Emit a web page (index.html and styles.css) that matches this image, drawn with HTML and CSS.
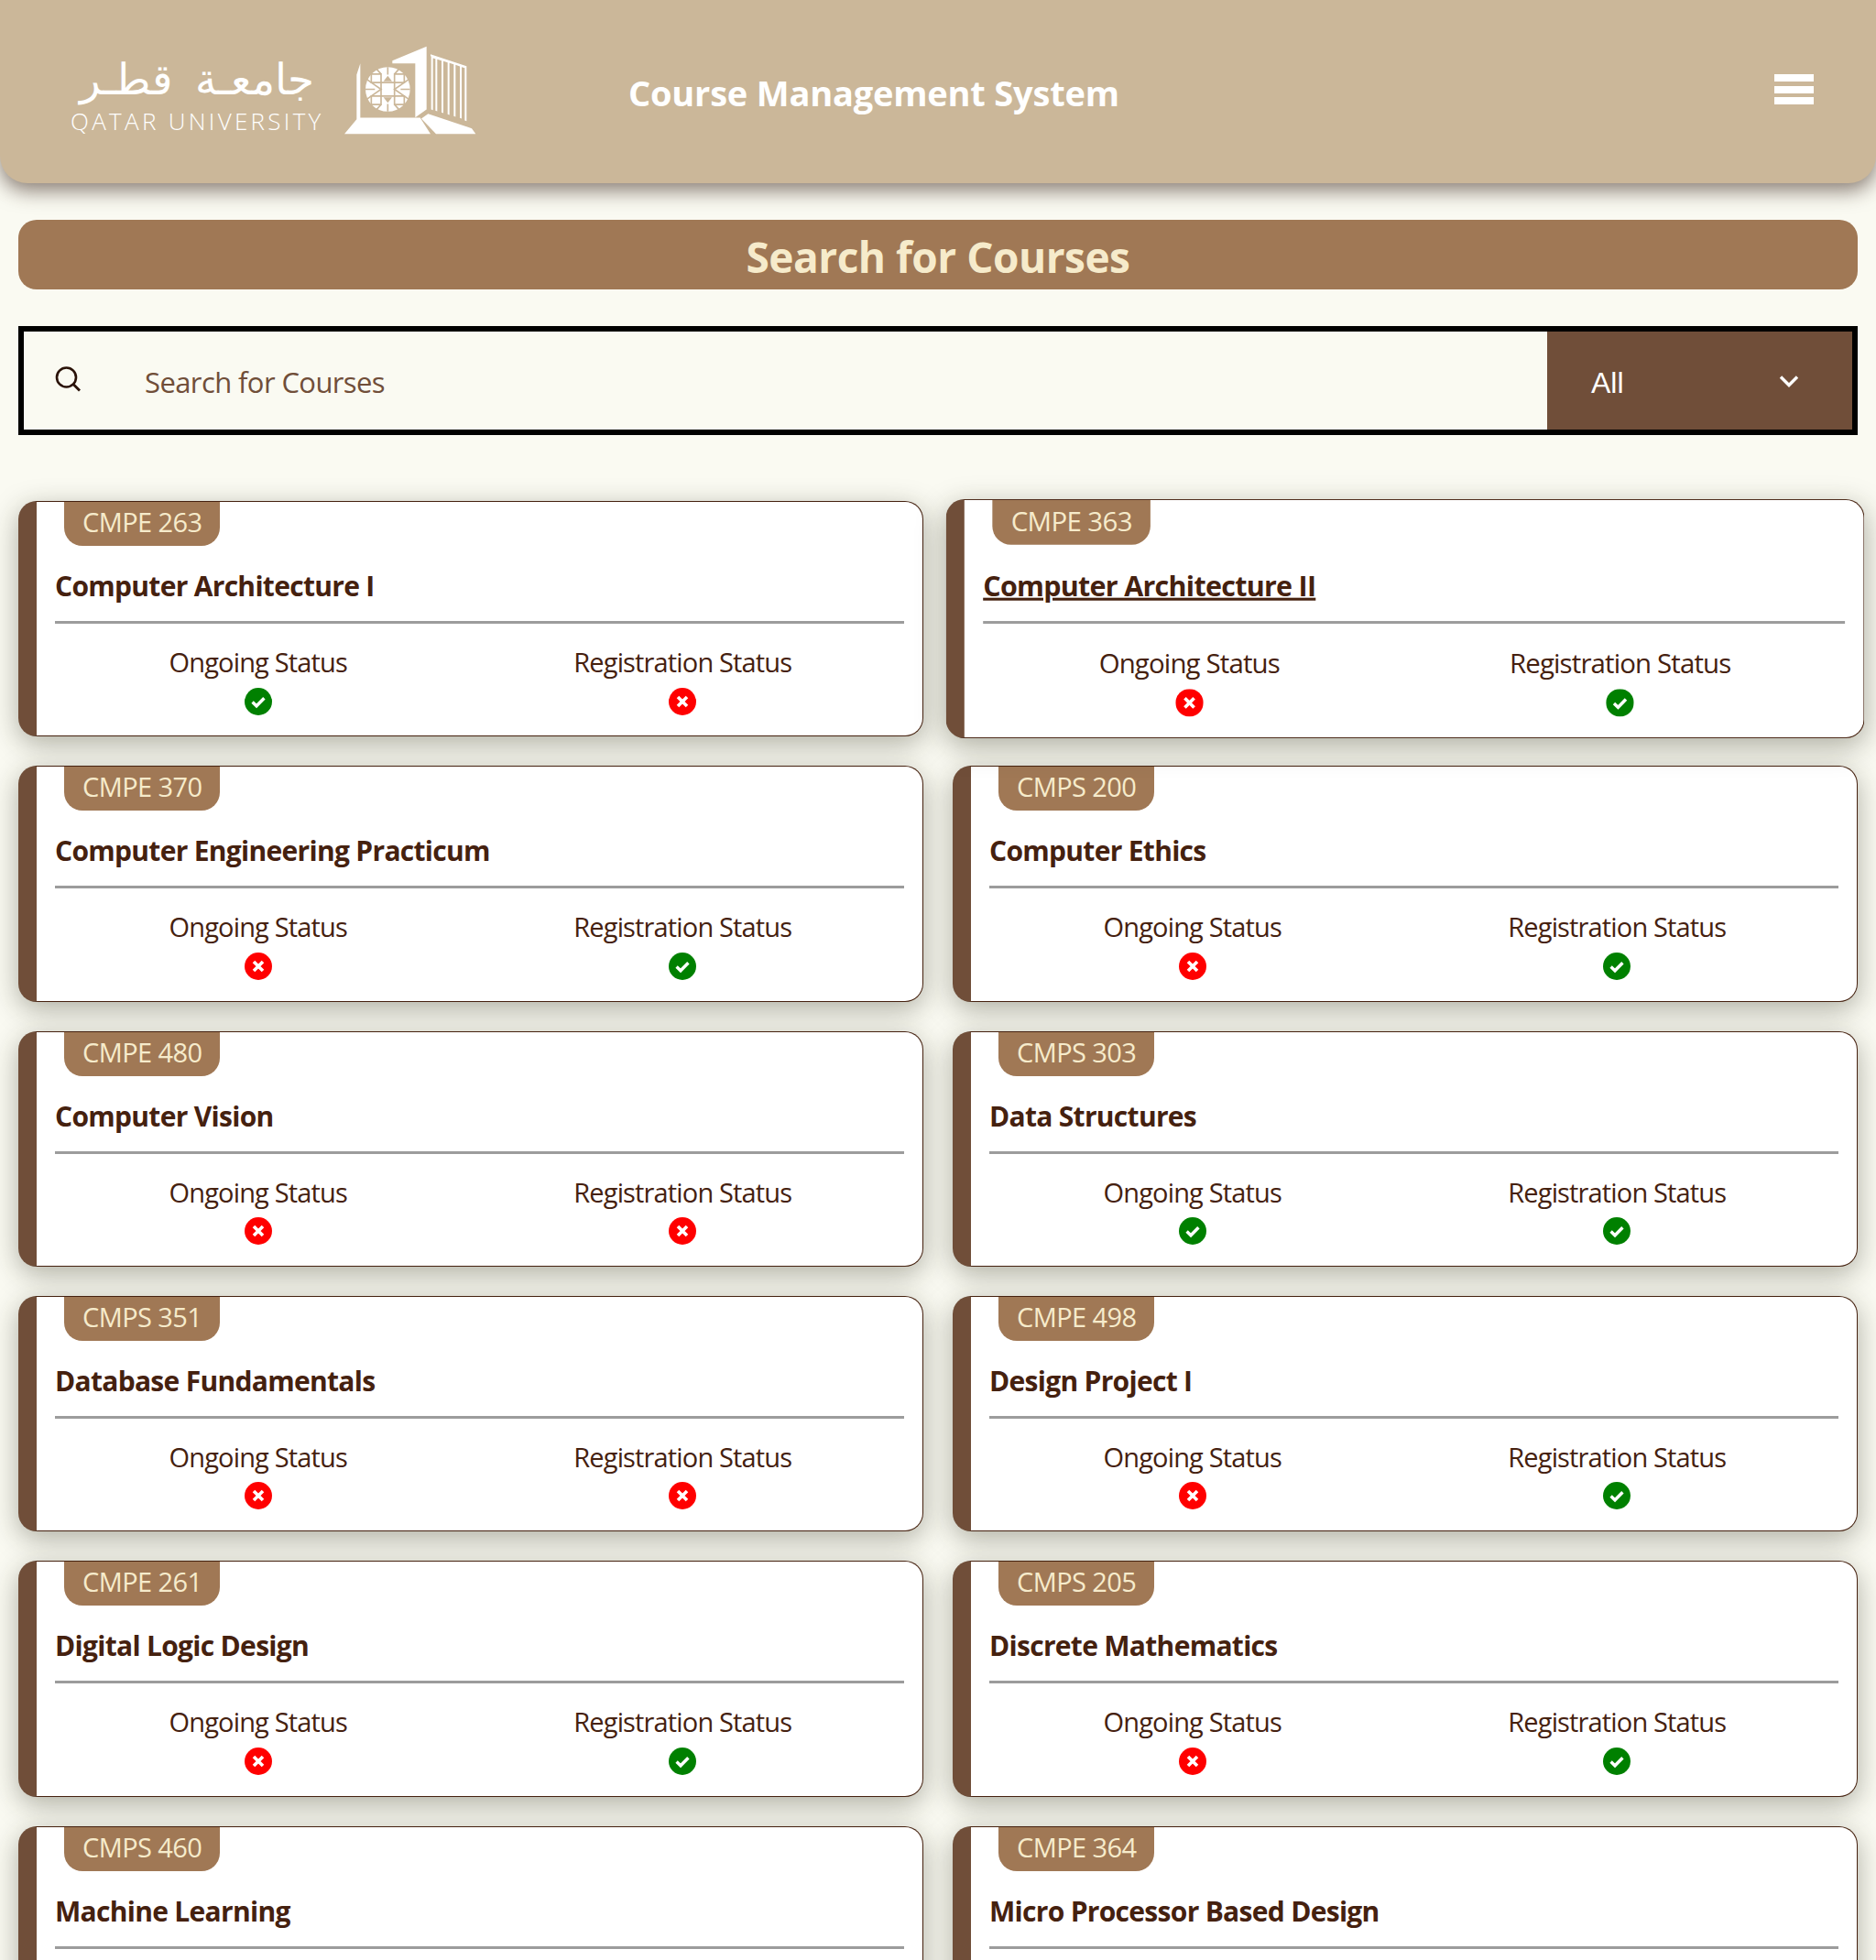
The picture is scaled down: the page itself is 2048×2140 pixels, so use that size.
FILE: index.html
```html
<!DOCTYPE html>
<html lang="en">
<head>
<meta charset="utf-8">
<title>Course Management System</title>
<link rel="stylesheet" href="styles.css">
</head>
<body>
<svg class="defs" width="0" height="0" aria-hidden="true">
  <symbol id="ok" viewBox="0 0 30 30"><circle cx="15" cy="15" r="15" fill="#008000"/><path d="M8.6 15.6l4.4 4.2 8.4-8.6" fill="none" stroke="#fff" stroke-width="3.4"/></symbol>
  <symbol id="no" viewBox="0 0 30 30"><circle cx="15" cy="15" r="15" fill="#f00"/><path d="M10 10l10 10M20 10L10 20" fill="none" stroke="#fff" stroke-width="3.6"/></symbol>
</svg>
<header class="topbar">
  <div class="logo">
    <div class="logo-text">
      <div class="logo-ar" lang="ar" dir="rtl">جامعـة قطـر</div>
      <div class="logo-en">QATAR UNIVERSITY</div>
    </div>
    <svg class="logo-mark" viewBox="45 28 435 290" width="145" height="97" aria-hidden="true">
      <g fill="#fff">
        <path d="M88 122L100 85V263H296L330 316H48L88 268Z"/>
        <path d="M205 76L317 30V236L280 262V85H205Z"/>
        <path d="M322 250L465 298L478 316H348L300 266Z"/>
        <path d="M330 55L448 94V274L442 272V100L432 97V266L426 264V95L412 90V260L406 258V88L392 84V254L386 252V82L372 78V248L366 246V76L352 72V242L346 240V70L338 68V238L332 236V62L330 61Z"/>
        <circle cx="190" cy="170" r="73"/>
      </g>
      <g fill="none" stroke="#cbb799" stroke-width="5">
        <path d="M168 148H212V192H168Z"/>
        <path d="M136 120H168V148H136ZM212 120H244V148H212ZM136 192H168V220H136ZM212 192H244V220H212Z"/>
        <path d="M190 97V122M168 120L150 100M212 120L230 100M190 218V243M168 220L150 240M212 220L230 240"/>
        <path d="M117 170H148M263 170H232M136 148L118 135M244 148L262 135M136 192L118 205M244 192L262 205"/>
        <path d="M136 148L168 170L136 192M244 148L212 170L244 192"/>
      </g>
      <path d="M176 144L190 126L204 144ZM176 196L190 214L204 196Z" fill="#cbb799"/>
    </svg>
  </div>
  <h1 class="app-title">Course Management System</h1>
  <button class="menu-btn" type="button" aria-label="Menu"><span></span><span></span><span></span></button>
</header>
<main class="content">
  <h2 class="page-title">Search for Courses</h2>
  <div class="search">
    <svg class="search-icon" viewBox="0 0 28 28" width="28" height="28" aria-hidden="true"><circle cx="12.5" cy="12" r="10.5" fill="none" stroke="#2a1208" stroke-width="2.6"/><path d="M20 19.5l7 7" stroke="#2a1208" stroke-width="2.8"/></svg>
    <span class="search-text">Search for Courses</span>
    <div class="select"><span>All</span><svg viewBox="0 0 22 14" width="22" height="14" aria-hidden="true"><path d="M2 2.5l9 9 9-9" fill="none" stroke="#fff" stroke-width="3.4"/></svg></div>
  </div>
  <section class="grid">
    <article class="card"><div class="badge">CMPE 263</div><h3 class="name">Computer Architecture I</h3><div class="rule"></div><div class="statuses"><div class="status">Ongoing Status<svg class="dot"><use href="#ok"/></svg></div><div class="status">Registration Status<svg class="dot"><use href="#no"/></svg></div></div></article>
    <article class="card is-hover"><div class="badge">CMPE 363</div><h3 class="name">Computer Architecture II</h3><div class="rule"></div><div class="statuses"><div class="status">Ongoing Status<svg class="dot"><use href="#no"/></svg></div><div class="status">Registration Status<svg class="dot"><use href="#ok"/></svg></div></div></article>
    <article class="card"><div class="badge">CMPE 370</div><h3 class="name">Computer Engineering Practicum</h3><div class="rule"></div><div class="statuses"><div class="status">Ongoing Status<svg class="dot"><use href="#no"/></svg></div><div class="status">Registration Status<svg class="dot"><use href="#ok"/></svg></div></div></article>
    <article class="card"><div class="badge">CMPS 200</div><h3 class="name">Computer Ethics</h3><div class="rule"></div><div class="statuses"><div class="status">Ongoing Status<svg class="dot"><use href="#no"/></svg></div><div class="status">Registration Status<svg class="dot"><use href="#ok"/></svg></div></div></article>
    <article class="card"><div class="badge">CMPE 480</div><h3 class="name">Computer Vision</h3><div class="rule"></div><div class="statuses"><div class="status">Ongoing Status<svg class="dot"><use href="#no"/></svg></div><div class="status">Registration Status<svg class="dot"><use href="#no"/></svg></div></div></article>
    <article class="card"><div class="badge">CMPS 303</div><h3 class="name">Data Structures</h3><div class="rule"></div><div class="statuses"><div class="status">Ongoing Status<svg class="dot"><use href="#ok"/></svg></div><div class="status">Registration Status<svg class="dot"><use href="#ok"/></svg></div></div></article>
    <article class="card"><div class="badge">CMPS 351</div><h3 class="name">Database Fundamentals</h3><div class="rule"></div><div class="statuses"><div class="status">Ongoing Status<svg class="dot"><use href="#no"/></svg></div><div class="status">Registration Status<svg class="dot"><use href="#no"/></svg></div></div></article>
    <article class="card"><div class="badge">CMPE 498</div><h3 class="name">Design Project I</h3><div class="rule"></div><div class="statuses"><div class="status">Ongoing Status<svg class="dot"><use href="#no"/></svg></div><div class="status">Registration Status<svg class="dot"><use href="#ok"/></svg></div></div></article>
    <article class="card"><div class="badge">CMPE 261</div><h3 class="name">Digital Logic Design</h3><div class="rule"></div><div class="statuses"><div class="status">Ongoing Status<svg class="dot"><use href="#no"/></svg></div><div class="status">Registration Status<svg class="dot"><use href="#ok"/></svg></div></div></article>
    <article class="card"><div class="badge">CMPS 205</div><h3 class="name">Discrete Mathematics</h3><div class="rule"></div><div class="statuses"><div class="status">Ongoing Status<svg class="dot"><use href="#no"/></svg></div><div class="status">Registration Status<svg class="dot"><use href="#ok"/></svg></div></div></article>
    <article class="card"><div class="badge">CMPS 460</div><h3 class="name">Machine Learning</h3><div class="rule"></div></article>
    <article class="card"><div class="badge">CMPE 364</div><h3 class="name">Micro Processor Based Design</h3><div class="rule"></div></article>
  </section>
</main>
</body>
</html>
```
FILE: styles.css
```css
* { box-sizing: border-box; }
html, body { margin: 0; height: 2140px; overflow: hidden; }
body { background: #fafaf2; color: #45210f; font-family: "Open Sans", "Noto Sans", sans-serif; }
.defs { display: block; height: 0; }

.topbar { position: relative; z-index: 2; height: 200px; background: #cbb799; border-radius: 0 0 30px 30px; box-shadow: 0 8px 22px rgba(60, 40, 30, .6); display: flex; align-items: flex-start; padding: 50px 68px 0 77px; }
.logo { display: flex; align-items: flex-end; gap: 22px; width: 442px; height: 97px; }
.logo-text { width: 276px; color: #fff; }
.logo-ar { font-family: "DejaVu Sans", sans-serif; font-weight: 200; font-size: 47px; line-height: 64px; height: 62px; padding-top: 4px; text-align: center; white-space: nowrap; word-spacing: 10px; }
.logo-en { font-family: "Open Sans", sans-serif; font-weight: 300; font-size: 26px; line-height: 30px; letter-spacing: 3.3px; white-space: nowrap; margin-top: 4px; }
.logo-mark { flex: none; }
.app-title { margin: 24px 0 0 167px; color: #fff; font-size: 38px; line-height: 54px; font-weight: 700; letter-spacing: -.2px; white-space: nowrap; }
.menu-btn { margin: 31px 0 0 auto; padding: 0; border: 0; background: none; width: 43px; height: 33px; display: flex; flex-direction: column; justify-content: space-between; }
.menu-btn span { display: block; height: 8px; background: #fff; }

.content { height: 1940px; overflow: hidden; padding: 40px 20px 0; }
.page-title { margin: 0; height: 76px; padding-top: 2px; background: #a07855; border-radius: 20px; color: #f6ebcb; font-size: 46px; line-height: 76px; font-weight: 700; text-align: center; letter-spacing: -.5px; }
.search { margin-top: 40px; height: 119px; border: 6px solid #000; display: flex; align-items: center; background: #fafaf2; }
.search-icon { margin: -4px 0 0 34px; flex: none; }
.search-text { margin: 2px 0 0 70px; flex: 1; font-size: 31px; color: #704e39; letter-spacing: -.6px; }
.select { width: 333px; align-self: stretch; background: #704e39; color: #fff; display: flex; align-items: center; padding: 0 58px 0 48px; justify-content: space-between; font-family: "Liberation Sans", sans-serif; font-size: 32px; }
.select span { padding-top: 5px; }

.grid { margin-top: 72px; display: grid; grid-template-columns: 988px 988px; column-gap: 32px; row-gap: 32px; }
.card { height: 257.33px; background: #fff; border: 1px solid #45210f; border-left: 20px solid #704e39; border-radius: 20px; box-shadow: 0 8px 30px rgba(40, 40, 20, .36); }
.is-hover { transform: scale(1.015); z-index: 1; position: relative; }
.is-hover .name { text-decoration: underline; }
.badge { margin-left: 30px; width: max-content; height: 48px; padding: 0 20px; background: #a07855; color: #f6ebcb; border-radius: 0 0 20px 20px; font-size: 29px; line-height: 44px; letter-spacing: -.6px; }
.name { margin: 22px 0 0 20px; font-size: 30px; line-height: 44px; font-weight: 700; letter-spacing: -.7px; }
.rule { margin: 16px 20px 0; height: 3px; background: #9c9c9c; }
.statuses { margin: 22px 30px 0 10px; display: grid; grid-template-columns: 1fr 1fr; }
.status { display: flex; flex-direction: column; align-items: center; font-size: 29px; line-height: 40px; letter-spacing: -.85px; }
.dot { display: block; width: 30px; height: 30px; margin-top: 7.5px; }
```
